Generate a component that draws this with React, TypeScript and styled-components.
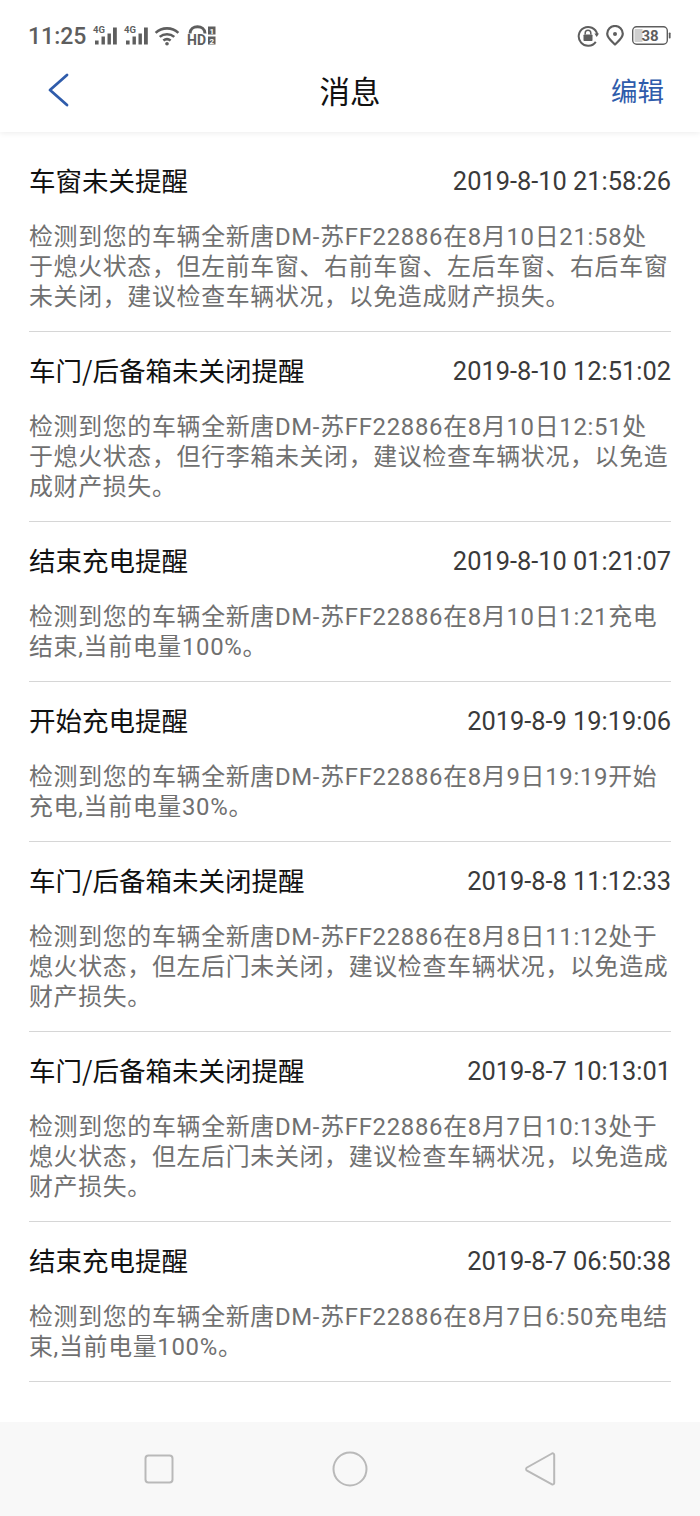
import React from 'react';
import styled, { createGlobalStyle } from 'styled-components';

const BLUE = '#2f5cab';
const ICON_GRAY = '#5e5e5e';

const GlobalStyle = createGlobalStyle`
  html, body {
    margin: 0;
    padding: 0;
    background: #fff;
  }
`;

const Page = styled.div`
  width: 700px;
  height: 1516px;
  display: flex;
  flex-direction: column;
  overflow: hidden;
  background: #fff;
  font-family: Roboto, 'Noto Sans CJK SC', sans-serif;
`;

const Top = styled.header`
  height: 132px;
  flex-shrink: 0;
  display: flex;
  flex-direction: column;
  box-shadow: 0 1px 6px rgba(0, 0, 0, 0.08);
  position: relative;
`;

const StatusBar = styled.div`
  height: 62px;
  padding: 9px 29px 0 28px;
  box-sizing: border-box;
  display: flex;
  align-items: center;
  justify-content: space-between;
  color: ${ICON_GRAY};
`;

const StatusGroup = styled.div`
  display: flex;
  align-items: center;
`;

const Clock = styled.span`
  margin: 2px 6px 0 0;
  font-size: 23px;
  font-weight: 500;
`;

const NavBar = styled.div`
  flex: 1;
  display: grid;
  grid-template-columns: 1fr auto 1fr;
  align-items: center;
  padding: 0 36px 14px;
`;

const BackSlot = styled.div`
  display: flex;
  padding-left: 11px;
`;

const NavTitle = styled.h1`
  margin: 0;
  font: 400 30.5px/40px 'Noto Sans CJK SC', sans-serif;
  color: #111;
`;

const NavAction = styled.span`
  justify-self: end;
  font: 400 26.5px/40px 'Noto Sans CJK SC', sans-serif;
  color: ${BLUE};
`;

const List = styled.main`
  flex: 1;
  padding: 10px 29px 0;
`;

const Row = styled.section`
  padding: 23px 0 19px;
  border-bottom: 1px solid #d6d6d6;
`;

const RowHead = styled.div`
  display: flex;
  align-items: center;
  justify-content: space-between;
  height: 30px;
  margin-bottom: 27px;
`;

const Title = styled.h2`
  margin: 0;
  font: 400 26.5px/30px 'Noto Sans CJK SC', sans-serif;
  color: #111;
`;

const Time = styled.span`
  margin-top: 2px;
  font: 400 25.4px/30px Roboto, sans-serif;
  color: #3a3a3a;
`;

// width is tight on purpose: it holds 26 CJK glyphs and forces the same wraps as the app
const Body = styled.p`
  margin: 0;
  max-width: 640px;
  font: 400 23.9px/30px Roboto, 'Noto Sans CJK SC', sans-serif;
  letter-spacing: 0.7px;
  color: #707070;
`;

const BottomBar = styled.nav`
  height: 94px;
  flex-shrink: 0;
  background: #f8f8f8;
  display: grid;
  grid-template-columns: repeat(3, 190px);
  justify-content: center;
  align-items: center;
  justify-items: center;
`;

const Signal = () => (
  <svg width="25" height="24" viewBox="0 0 25 24" style={{ marginRight: 6 }}>
    <text x="1" y="8.5" fontSize="9.5" fontWeight="700" fontFamily="Roboto, sans-serif" fill={ICON_GRAY}>4G</text>
    <g fill={ICON_GRAY}>
      <rect x="3" y="16.5" width="3.6" height="4" />
      <rect x="9.5" y="12.5" width="3.4" height="8" />
      <rect x="15.5" y="9.5" width="3.4" height="11" />
      <rect x="21" y="3.5" width="3.8" height="17" />
    </g>
  </svg>
);

const Wifi = () => (
  <svg width="26" height="20" viewBox="0 0 28 22" fill="none" stroke={ICON_GRAY} strokeWidth="2.8" style={{ margin: '0 7px 0 0' }}>
    <path d="M1.5 7.5C8.5 1 19.5 1 26.5 7.5" />
    <path d="M6 12C10.5 8 17.5 8 22 12" />
    <path d="M10 16C12.5 14 15.5 14 18 16" />
    <circle cx="14" cy="19.5" r="2" fill={ICON_GRAY} stroke="none" />
  </svg>
);

const HdIcon = () => (
  <svg width="29" height="28" viewBox="0 0 29 28">
    <path d="M3 11.5C3 2.5 18 2.5 18 11.5" fill="none" stroke={ICON_GRAY} strokeWidth="3" />
    <text x="0" y="22.5" fontSize="14" fontWeight="700" fontFamily="Roboto, sans-serif" fill={ICON_GRAY}>HD</text>
    <rect x="21" y="4.5" width="7.5" height="8" fill={ICON_GRAY} />
    <rect x="21" y="14.5" width="7.5" height="8" fill={ICON_GRAY} />
    <text x="24.7" y="11.7" textAnchor="middle" fontSize="8" fontWeight="700" fontFamily="Roboto, sans-serif" fill="#fff">1</text>
    <text x="24.7" y="21.7" textAnchor="middle" fontSize="8" fontWeight="700" fontFamily="Roboto, sans-serif" fill="#fff">2</text>
  </svg>
);

const RotationLock = () => (
  <svg width="22" height="22" viewBox="0 0 22 22" style={{ marginRight: 7 }}>
    <path d="M18.8 16.8A9.4 9.4 0 1 1 20.2 9" fill="none" stroke={ICON_GRAY} strokeWidth="2" />
    <path d="M17.4 8.5h4.6l-2.3 3.6z" fill={ICON_GRAY} />
    <rect x="6.5" y="9.5" width="9" height="6.5" rx="0.8" fill={ICON_GRAY} />
    <path d="M8.2 9.5V8a2.8 2.8 0 0 1 5.6 0v1.5" fill="none" stroke={ICON_GRAY} strokeWidth="1.5" />
  </svg>
);

const Location = () => (
  <svg width="18" height="21" viewBox="0 0 18 21" style={{ marginRight: 8 }}>
    <path d="M9 19.5C5.5 16 1.2 13 1.2 8.8a7.8 7.8 0 0 1 15.6 0C16.8 13 12.5 16 9 19.5z" fill="none" stroke={ICON_GRAY} strokeWidth="2.2" strokeLinejoin="round" />
    <circle cx="9" cy="9" r="2" fill={ICON_GRAY} />
  </svg>
);

const Battery = () => (
  <svg width="39" height="20" viewBox="0 0 39 20">
    <rect x="0.7" y="0.7" width="34.6" height="17.6" rx="4" fill="none" stroke={ICON_GRAY} strokeWidth="1.4" />
    <path d="M3.5 3h7v13h-7a1 1 0 0 1-1-1V4a1 1 0 0 1 1-1z" fill="#cfcfcf" />
    <rect x="36.8" y="6.5" width="1.8" height="6" rx="0.8" fill={ICON_GRAY} />
    <text x="18" y="15" textAnchor="middle" fontSize="15" fontWeight="700" fontFamily="Roboto, sans-serif" fill={ICON_GRAY}>38</text>
  </svg>
);

const BackIcon = () => (
  <svg width="22" height="34" viewBox="0 0 22 34" fill="none" stroke={BLUE} strokeWidth="2.8" strokeLinecap="round" strokeLinejoin="round">
    <path d="M20 2L3 17l17 15" />
  </svg>
);

const SquareIcon = () => (
  <svg width="30" height="30" viewBox="0 0 30 30" fill="none" stroke="#b9b9b9" strokeWidth="2" style={{ marginRight: 2 }}>
    <rect x="1.5" y="1.5" width="27" height="27" rx="3" />
  </svg>
);

const CircleIcon = () => (
  <svg width="36" height="36" viewBox="0 0 36 36" fill="none" stroke="#b9b9b9" strokeWidth="2">
    <circle cx="18" cy="18" r="16.5" />
  </svg>
);

const TriangleIcon = () => (
  <svg width="32" height="36" viewBox="0 0 32 36" fill="none" stroke="#b9b9b9" strokeWidth="2" strokeLinejoin="round">
    <path d="M28 2.5c1-.5 2.2.2 2.2 1.4v28c0 1.2-1.2 2-2.2 1.4L3 19.6c-1.2-.7-1.2-2.4 0-3.1z" />
  </svg>
);

const messages = [
  {
    title: '车窗未关提醒',
    time: '2019-8-10 21:58:26',
    body: '检测到您的车辆全新唐DM-苏FF22886在8月10日21:58处于熄火状态，但左前车窗、右前车窗、左后车窗、右后车窗未关闭，建议检查车辆状况，以免造成财产损失。',
  },
  {
    title: '车门/后备箱未关闭提醒',
    time: '2019-8-10 12:51:02',
    body: '检测到您的车辆全新唐DM-苏FF22886在8月10日12:51处于熄火状态，但行李箱未关闭，建议检查车辆状况，以免造成财产损失。',
  },
  {
    title: '结束充电提醒',
    time: '2019-8-10 01:21:07',
    body: '检测到您的车辆全新唐DM-苏FF22886在8月10日1:21充电结束,当前电量100%。',
  },
  {
    title: '开始充电提醒',
    time: '2019-8-9 19:19:06',
    body: '检测到您的车辆全新唐DM-苏FF22886在8月9日19:19开始充电,当前电量30%。',
  },
  {
    title: '车门/后备箱未关闭提醒',
    time: '2019-8-8 11:12:33',
    body: '检测到您的车辆全新唐DM-苏FF22886在8月8日11:12处于熄火状态，但左后门未关闭，建议检查车辆状况，以免造成财产损失。',
  },
  {
    title: '车门/后备箱未关闭提醒',
    time: '2019-8-7 10:13:01',
    body: '检测到您的车辆全新唐DM-苏FF22886在8月7日10:13处于熄火状态，但左后门未关闭，建议检查车辆状况，以免造成财产损失。',
  },
  {
    title: '结束充电提醒',
    time: '2019-8-7 06:50:38',
    body: '检测到您的车辆全新唐DM-苏FF22886在8月7日6:50充电结束,当前电量100%。',
  },
];

const App = () => {
  return (
    <Page>
      <GlobalStyle />
      <Top>
        <StatusBar>
          <StatusGroup>
            <Clock>11:25</Clock>
            <Signal />
            <Signal />
            <Wifi />
            <HdIcon />
          </StatusGroup>
          <StatusGroup>
            <RotationLock />
            <Location />
            <Battery />
          </StatusGroup>
        </StatusBar>
        <NavBar>
          <BackSlot>
            <BackIcon />
          </BackSlot>
          <NavTitle>消息</NavTitle>
          <NavAction>编辑</NavAction>
        </NavBar>
      </Top>
      <List>
        {messages.map((m) => (
          <Row key={m.time}>
            <RowHead>
              <Title>{m.title}</Title>
              <Time>{m.time}</Time>
            </RowHead>
            <Body>{m.body}</Body>
          </Row>
        ))}
      </List>
      <BottomBar>
        <SquareIcon />
        <CircleIcon />
        <TriangleIcon />
      </BottomBar>
    </Page>
  );
};

export default App;
